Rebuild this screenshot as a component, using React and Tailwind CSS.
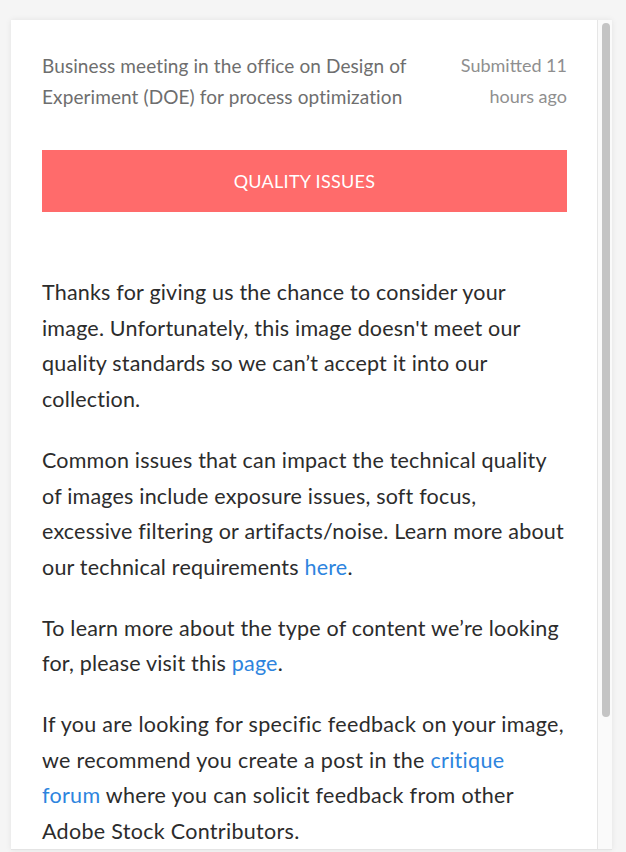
const BODY = 'text-[21.5px] leading-[35.7px] tracking-[0.2px] text-[#2c2c2c]'

function Link({ children }) {
  return <a href="#" className="text-[#2d84de]">{children}</a>
}

export default function App() {
  return (
    <div className="min-h-screen bg-[#f5f5f5] pt-5 pl-[11px] pr-[14px] font-['Lato','Open_Sans',sans-serif]">
      <div className="flex h-[830px] bg-white shadow-[0_0_6px_rgba(0,0,0,0.08)] border-b border-[#e4e4e4] overflow-hidden">
        <div className="flex-1 border-r border-[#e6e6e6] pl-[31px] pr-[30px] pt-[30px]">
          {/* header */}
          <div className="flex justify-between gap-6 leading-[31px]">
            <p className="flex-1 text-[19px] tracking-[0.1px] text-[#6e6e6e]">
              Business meeting in the office on Design of Experiment (DOE) for process optimization
            </p>
            <p className="w-[110px] text-right text-[18px] text-[#8f8f8f]">Submitted 11 hours ago</p>
          </div>

          <div className="mt-[38px] h-[62px] bg-[#ff6b6b] flex items-center justify-center text-white text-[18px] tracking-[0.3px]">
            QUALITY ISSUES
          </div>

          <div className={`mt-[63px] flex flex-col gap-[25px] ${BODY}`}>
            <p>
              Thanks for giving us the chance to consider your image. Unfortunately, this image doesn't meet our
              quality standards so we can’t accept it into our collection.
            </p>
            <p>
              Common issues that can impact the technical quality of images include exposure issues, soft focus,
              excessive filtering or artifacts/noise. Learn more about our technical requirements <Link>here</Link>.
            </p>
            <p>
              To learn more about the type of content we’re looking for, please visit this <Link>page</Link>.
            </p>
            <p className="tracking-[0.3px]">
              If you are looking for specific feedback on your image, we recommend you create a post in the{' '}
              <Link>critique forum</Link> where you can solicit feedback from other Adobe Stock Contributors.
            </p>
          </div>
        </div>

        {/* scrollbar */}
        <div className="w-[14px] bg-[#fafafa] pt-[3px] pl-[4px]">
          <div className="w-[8px] h-[694px] rounded-full bg-[#c4c4c4]" />
        </div>
      </div>
    </div>
  )
}
